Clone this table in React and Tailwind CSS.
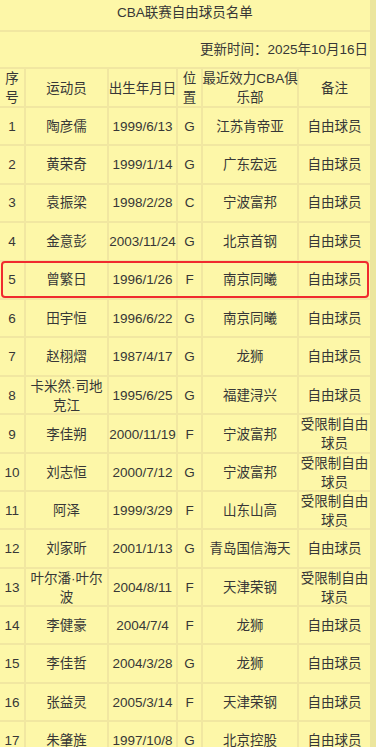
import React from 'react';

const players = [
  ['1', '陶彦儒', '1999/6/13', 'G', '江苏肯帝亚', '自由球员'],
  ['2', '黄荣奇', '1999/1/14', 'G', '广东宏远', '自由球员'],
  ['3', '袁振梁', '1998/2/28', 'C', '宁波富邦', '自由球员'],
  ['4', '金意彭', '2003/11/24', 'G', '北京首钢', '自由球员'],
  ['5', '曾繁日', '1996/1/26', 'F', '南京同曦', '自由球员'],
  ['6', '田宇恒', '1996/6/22', 'G', '南京同曦', '自由球员'],
  ['7', '赵栩熠', '1987/4/17', 'G', '龙狮', '自由球员'],
  ['8', ['卡米然·司地', '克江'], '1995/6/25', 'G', '福建浔兴', '自由球员'],
  ['9', '李佳朔', '2000/11/19', 'F', '宁波富邦', ['受限制自由', '球员']],
  ['10', '刘志恒', '2000/7/12', 'G', '宁波富邦', ['受限制自由', '球员']],
  ['11', '阿泽', '1999/3/29', 'F', '山东山高', ['受限制自由', '球员']],
  ['12', '刘家昕', '2001/1/13', 'G', '青岛国信海天', '自由球员'],
  ['13', ['叶尔潘·叶尔', '波'], '2004/8/11', 'F', '天津荣钢', ['受限制自由', '球员']],
  ['14', '李健豪', '2004/7/4', 'F', '龙狮', '自由球员'],
  ['15', '李佳哲', '2004/3/28', 'G', '龙狮', '自由球员'],
  ['16', '张益灵', '2005/3/14', 'F', '天津荣钢', '自由球员'],
  ['17', '朱肇旌', '1997/10/8', 'G', '北京控股', '自由球员'],
];

const grid = 'grid grid-cols-[26px_83px_69px_25px_96px_71px]';

function Cell({ value, last }) {
  const lines = Array.isArray(value) ? value : [value];
  return (
    <div
      className={`flex flex-col items-center justify-center text-center whitespace-nowrap ${
        last ? '' : 'border-r-2 border-[#f1e7a1]'
      }`}
    >
      {lines.map((line, i) => (
        <span key={i}>{line}</span>
      ))}
    </div>
  );
}

export default function App() {
  const headers = [['序', '号'], '运动员', '出生年月日', ['位', '置'], ['最近效力CBA俱', '乐部'], '备注'];

  return (
    <div
      className="flex w-[376px] h-[747px] overflow-hidden bg-[#fdf7a8] text-[#373737] text-[13.5px] leading-[19px]"
      style={{ fontFamily: '"Liberation Sans", "Noto Sans CJK SC", sans-serif' }}
    >
      <div className="relative w-[370px] shrink-0">
        {/* title */}
        <div className="h-[32px] flex justify-center pt-[3px] border-b-2 border-[#f1e7a1]">
          CBA联赛自由球员名单
        </div>

        {/* update time */}
        <div className="h-[37px] flex items-center justify-end pr-[2px] border-b-2 border-[#f1e7a1]">
          更新时间：2025年10月16日
        </div>

        {/* header */}
        <div className={`${grid} h-[39px] border-b-2 border-[#f1e7a1]`}>
          {headers.map((h, i) => (
            <Cell key={i} value={h} last={i === headers.length - 1} />
          ))}
        </div>

        {players.map((row) => (
          <div key={row[0]} className={`${grid} h-[38.4px] border-b-2 border-[#f1e7a1]`}>
            {row.map((v, i) => (
              <Cell key={i} value={v} last={i === row.length - 1} />
            ))}
          </div>
        ))}

        {/* highlight */}
        <div className="absolute left-[1px] top-[260.5px] w-[368px] h-[37px] border-[2.5px] border-[#f02a2e] rounded-[4px]" />
      </div>
      <div className="flex-1 bg-[#ece69e]" />
    </div>
  );
}
